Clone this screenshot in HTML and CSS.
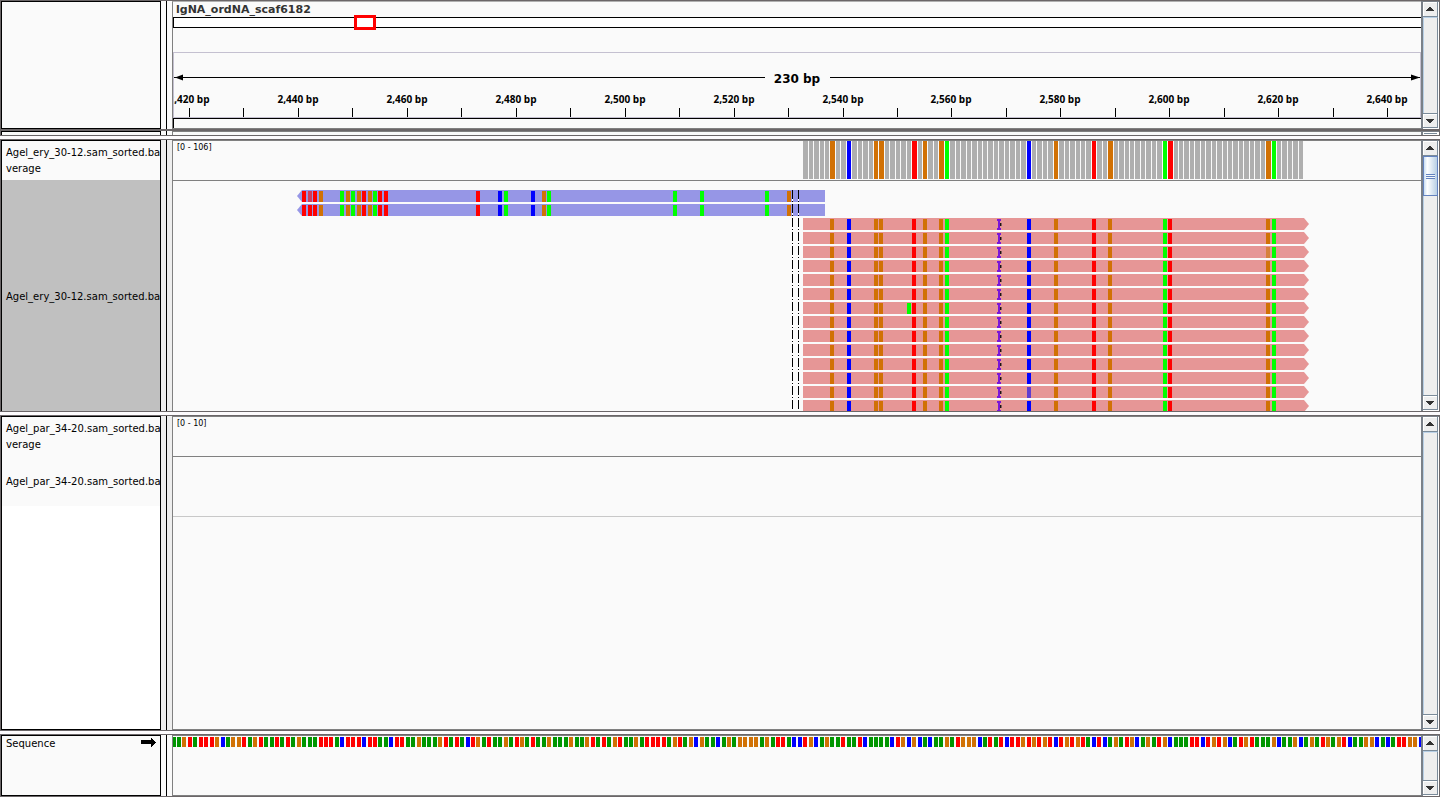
FILE: index.html
```html
<!DOCTYPE html>
<html lang="en">
<head>
<meta charset="utf-8">
<title>Genome browser</title>
<link rel="stylesheet" href="styles.css">
</head>
<body>
<main class="browser">
  <section class="panel panel-header">
    <div class="names"></div>
    <div class="gutter"></div>
    <div class="plot header-plot">
      <h1 class="scaffold">lgNA_ordNA_scaf6182</h1>
      <div class="ideogram"><div class="region"></div></div>
      <div class="ruler"><svg id="ruler"></svg></div>
      <div class="feature-row"></div>
    </div>
    <div class="scrollbar">
      <button class="arrow" aria-label="Scroll up"><svg viewBox="0 0 8 4"><path d="M3 0h2v1h1v1h1v1h1v1H0V3h1V2h1V1h1z"/></svg></button>
      <div class="track"></div>
      <button class="arrow" aria-label="Scroll down"><svg viewBox="0 0 8 4"><path d="M0 0h8v1H7v1H6v1H5v1H3V3H2V2H1V1H0z"/></svg></button>
    </div>
  </section>
  <section class="panel panel-sliver">
    <div class="names"></div>
    <div class="gutter"></div>
    <div class="plot"></div>
    <div class="scrollbar"><div class="stub"></div></div>
  </section>
  <section class="panel panel-reads">
    <div class="names">
      <div class="name-coverage">Agel_ery_30-12.sam_sorted.bar<br>verage</div>
      <div class="name-track selected">Agel_ery_30-12.sam_sorted.bar</div>
    </div>
    <div class="gutter"></div>
    <div class="plot">
      <div class="coverage"><span class="range">[0 - 106]</span><svg id="coverage"></svg></div>
      <svg id="reads"></svg>
    </div>
    <div class="scrollbar">
      <button class="arrow" aria-label="Scroll up"><svg viewBox="0 0 8 4"><path d="M3 0h2v1h1v1h1v1h1v1H0V3h1V2h1V1h1z"/></svg></button>
      <div class="track"><div class="thumb"></div></div>
      <button class="arrow" aria-label="Scroll down"><svg viewBox="0 0 8 4"><path d="M0 0h8v1H7v1H6v1H5v1H3V3H2V2H1V1H0z"/></svg></button>
    </div>
  </section>
  <section class="panel panel-empty">
    <div class="names">
      <div class="name-coverage">Agel_par_34-20.sam_sorted.bar<br>verage</div>
      <div class="name-track">Agel_par_34-20.sam_sorted.bar</div>
    </div>
    <div class="gutter"></div>
    <div class="plot">
      <div class="coverage"><span class="range">[0 - 10]</span></div>
      <div class="empty-track"></div>
    </div>
    <div class="scrollbar">
      <button class="arrow" aria-label="Scroll up"><svg viewBox="0 0 8 4"><path d="M3 0h2v1h1v1h1v1h1v1H0V3h1V2h1V1h1z"/></svg></button>
      <div class="track"></div>
      <button class="arrow" aria-label="Scroll down"><svg viewBox="0 0 8 4"><path d="M0 0h8v1H7v1H6v1H5v1H3V3H2V2H1V1H0z"/></svg></button>
    </div>
  </section>
  <section class="panel panel-sequence">
    <div class="names">
      <div class="name-sequence"><span>Sequence</span>
        <svg class="strand" viewBox="0 0 15 9"><path d="M0 2h10V0h1v1h1v1h1v1h1v1h1v1h-1v1h-1v1h-1v1h-1v1h-1V6H0z"/></svg>
      </div>
    </div>
    <div class="gutter"></div>
    <div class="plot"><svg id="sequence"></svg></div>
    <div class="scrollbar">
      <button class="arrow" aria-label="Scroll up"><svg viewBox="0 0 8 4"><path d="M3 0h2v1h1v1h1v1h1v1H0V3h1V2h1V1h1z"/></svg></button>
      <div class="track"></div>
      <button class="arrow" aria-label="Scroll down"><svg viewBox="0 0 8 4"><path d="M0 0h8v1H7v1H6v1H5v1H3V3H2V2H1V1H0z"/></svg></button>
    </div>
  </section>
</main>
<script src="tracks.js"></script>
</body>
</html>
```
FILE: styles.css
```css
* { box-sizing: border-box; }
html, body { height: 100%; margin: 0; }
body {
  background: #fdfbfd;
  color: #000;
  font-family: "DejaVu Sans", sans-serif;
  font-size: 10px;
}
svg { display: block; }

.browser { display: flex; flex-direction: column; height: 100vh; overflow: hidden; }

.panel {
  display: grid;
  grid-template-columns: 160px 11px minmax(0, 1fr) 18px;
  grid-template-rows: minmax(0, 1fr);
  border: 1px solid #6b6668;
  min-height: 0;
}
.panel-header { flex: 0 0 131px; border-bottom-width: 2px; }
.panel-sliver { flex: 0 0 5px; border-top: 0; margin-bottom: 3px; }
.panel-reads { flex: 273 1 0; margin-bottom: 3px; }
.panel-empty { flex: 316 1 0; margin-bottom: 3px; }
.panel-sequence { flex: 0 0 63px; }

.names { border: 1px solid #000; background: #fafafa; overflow: hidden; white-space: nowrap; display: flex; flex-direction: column; }
.panel-sliver .names, .panel-reads .names { border-bottom: 0; }
.panel-empty .names { background: #fff; }
.name-coverage { height: 39px; padding: 4px 0 0 4px; line-height: 16px; background: #fafafa; }
.name-track { height: 50px; padding: 0 0 0 4px; line-height: 52px; background: #fafafa; }
.name-track.selected { display: flex; flex: 1; align-items: center; background: #c0c0c0; line-height: 16px; padding-top: 2px; }
.name-sequence { display: flex; align-items: center; justify-content: space-between; height: 15px; padding: 0 4px; }
.strand { width: 15px; height: 9px; margin-bottom: 2px; }

.gutter { background: linear-gradient(#000, #000) 5px 0 / 1px 100% no-repeat #fafafa; }
.panel-reads .gutter, .panel-empty .gutter { background-color: #eee; }

.plot { border: 1px solid #808080; border-right: 0; background: #fafafa; overflow: hidden; }
.panel-sliver .plot, .panel-reads .plot { border-bottom: 0; }
.plot > svg, .coverage svg, .ruler svg { width: 100%; }

.header-plot { display: flex; flex-direction: column; border-top-color: #b0b0b0; }
.scaffold { margin: 0; padding-left: 3px; height: 15px; line-height: 15px; font-size: 11px; color: #333; }
.ideogram { position: relative; height: 11px; border: 1px solid #000; border-right: 0; background: #fff; }
.region { position: absolute; left: 14.4%; top: -3px; width: 22px; height: 15px; border: 3px solid #f00; }
.ruler { height: 66px; margin-top: 24px; border: 1px solid #c4c0d0; }
.ruler svg { height: 64px; }
.ruler text { text-anchor: middle; font-weight: bold; }
.ruler .span { font-size: 12px; }
.ruler .tick { font-family: "Open Sans", sans-serif; font-size: 10px; }
.feature-row { flex: 1; border: 1px solid #000; border-width: 1px 0 0 1px; background: #fafafa; }

.coverage { position: relative; height: 40px; border-bottom: 1px solid #808080; }
.coverage svg { height: 39px; }
.range { position: absolute; left: 4px; top: 2px; font-size: 8px; line-height: 10px; }
.empty-track { height: 60px; border-bottom: 1px solid #c8c8c8; }
#reads { height: 100%; }
#sequence { height: 20px; }

.scrollbar {
  display: flex;
  flex-direction: column;
  border: solid #7a8088;
  border-width: 1px 0 0 2px;
  background: #fff;
  padding-right: 1px;
}
.arrow {
  display: flex;
  align-items: center;
  justify-content: center;
  flex: 0 0 15px;
  padding: 0;
  border: 1px solid #7a8a99;
  border-width: 0 1px 1px 0;
  background: #eee;
  box-shadow: inset 1px 1px #fff;
}
.arrow:last-child { border-top-width: 1px; box-shadow: inset 1px 1px #fff; margin-bottom: 1px; }
.arrow svg { width: 8px; height: 4px; fill: #333; }
.track { flex: 1; border: 1px solid #b8cfe5; border-width: 1px 0 0 1px; border-right: 1px solid #7a8a99; background: #eee; }
.thumb {
  display: flex;
  height: 17%;
  margin: -1px -1px 0;
  border: 1px solid #6382bf;
  background: linear-gradient(90deg, #c8ddf2, #fff 25%, #b8cfe5);
}
.thumb::before {
  content: "";
  flex: 1;
  height: 5px;
  margin: auto 2px;
  background: repeating-linear-gradient(#6382bf 0 1px, #f4f8fc 1px 2px);
}
.stub { height: 2px; margin: 0 1px; border-bottom: 1px solid #7a8a99; }
```
FILE: tracks.js
```js
const BASES = 229.16;
const ORIGIN = -1;
const COLORS = { G: '#00ff00', R: '#ff0000', B: '#0000ff', O: '#d17105' };
const SEQ_COLORS = { G: '#009600', R: '#ff0000', B: '#0000ff', O: '#d17105' };

const SEQUENCE =
  'GGORGRRROBGOORGORGGRGRGOGGGRRRGBRRRBRRGGBRRGGO' +
  'GGGORGRGBROGRGGOGROGRGGOGGGOGGORGRGORGGOGRRRRGORGOBOGGBGOGOOOO' +
  'GOGRRGBBROBGOGGRGGRBGGGGBROBOBGBGGOGROOOBGRGRBRRORORORBRORORGBR' +
  'BGOGROBGOGROBGGGRRBROROBGRORGGGOBGGOBGOGROGORBGGOOBGBGRROOB';

const VARIANTS = {
  121: 'O', 124: 'B', 129: 'O', 130: 'O', 136: 'R', 138: 'O', 141: 'O', 142: 'G',
  157: 'B', 162: 'O', 169: 'R', 172: 'O', 182: 'G', 183: 'R', 201: 'O', 202: 'G'
};
const REVERSE = {
  24: 'R', 25: 'R', 26: 'R', 27: 'O', 31: 'G', 32: 'O', 33: 'G', 34: 'O', 35: 'R', 36: 'O',
  37: 'G', 38: 'R', 39: 'R', 56: 'R', 60: 'B', 61: 'G', 66: 'B', 68: 'O', 69: 'G',
  92: 'G', 97: 'G', 109: 'G', 113: 'O'
};
// Low-quality calls are drawn paler, keyed by row and base.
const FAINT_REVERSE = { '0:25': '#d23c5a' };
const FAINT_FORWARD = { '2:201': '#d6803c', '12:157': '#5f3ccf' };

const rect = (x, y, w, h, fill) =>
  `<rect x="${x}" y="${y}" width="${w}" height="${h}" fill="${fill}"/>`;

function draw() {
  const width = document.getElementById('sequence').clientWidth;
  const scale = width / BASES;
  const at = i => Math.floor(ORIGIN + i * scale);

  document.getElementById('sequence').innerHTML =
    [...SEQUENCE].map((b, i) => rect(at(i), 1, 4, 10, SEQ_COLORS[b])).join('');

  let cov = '';
  for (let i = 116; i <= 207; i++) {
    cov += rect(at(i), 0, at(i + 1) - at(i) - 1, 38, COLORS[VARIANTS[i]] || '#afafaf');
  }
  document.getElementById('coverage').innerHTML = cov;

  let reads = '';
  const end = at(120);
  for (let r = 0; r < 2; r++) {
    const y = 9 + r * 14, x = at(24);
    reads += `<path fill="#9696e6" d="M${x - 5} ${y + 6}L${x} ${y}H${end}V${y + 12}H${x}z"/>`;
    for (const i in REVERSE) {
      reads += rect(at(+i), y + 1, 4, 11, FAINT_REVERSE[r + ':' + i] || COLORS[REVERSE[i]]);
    }
  }
  const start = at(116), tail = at(208);
  for (let r = 0; r < 14; r++) {
    const y = 37 + r * 14;
    reads += `<path fill="#e69696" d="M${start} ${y}H${tail}L${tail + 5} ${y + 6}L${tail} ${y + 12}H${start}z"/>`;
    for (const i in VARIANTS) {
      reads += rect(at(+i), y + 1, 4, 11, FAINT_FORWARD[r + ':' + i] || COLORS[VARIANTS[i]]);
    }
    if (r === 6) reads += rect(at(135), y + 1, 4, 11, COLORS.G);
    const m = at(152) - 2;
    reads += rect(m + 1, y + 1, 2, 11, '#7a16d8') + rect(m, y + 1, 4, 2, '#7a16d8') +
      rect(m, y + 10, 4, 2, '#7a16d8') + rect(m + 3, y + 5, 1, 3, '#201010') + rect(m + 4, y + 5, 1, 3, '#80605c');
  }
  [at(114), at(115)].forEach(x => {
    reads += `<path d="M${x + 0.5} 9V228" stroke="#fff"/>` +
      `<path d="M${x + 0.5} 9V228" stroke="#000" stroke-dasharray="9 2 1 2"/>`;
  });
  document.getElementById('reads').innerHTML = reads;

  const mid = Math.floor(width / 2) - 2;
  const y = 24;
  let ruler = rect(0, y, mid - 31, 1, '#000') + rect(mid + 34, y, width - mid - 36, 1, '#000') +
    `<path d="M1 ${y + 0.5}L9 ${y - 2.5}V${y + 3.5}z"/>` +
    `<path d="M${width - 2} ${y + 0.5}L${width - 11} ${y - 2.5}V${y + 3.5}z"/>` +
    `<text class="span" x="${mid + 1}" y="30">230 bp</text>`;
  for (let k = 0; k <= 22; k++) {
    const x = Math.floor(15.5 + k * 10 * scale);
    ruler += rect(x, 55, 1, 9, '#000');
    if (k % 2 === 0) {
      ruler += `<text class="tick" x="${x}" y="50">${(2420 + k * 10).toLocaleString('en-US')} bp</text>`;
    }
  }
  document.getElementById('ruler').innerHTML = ruler;
}

draw();
window.addEventListener('resize', draw);
```
